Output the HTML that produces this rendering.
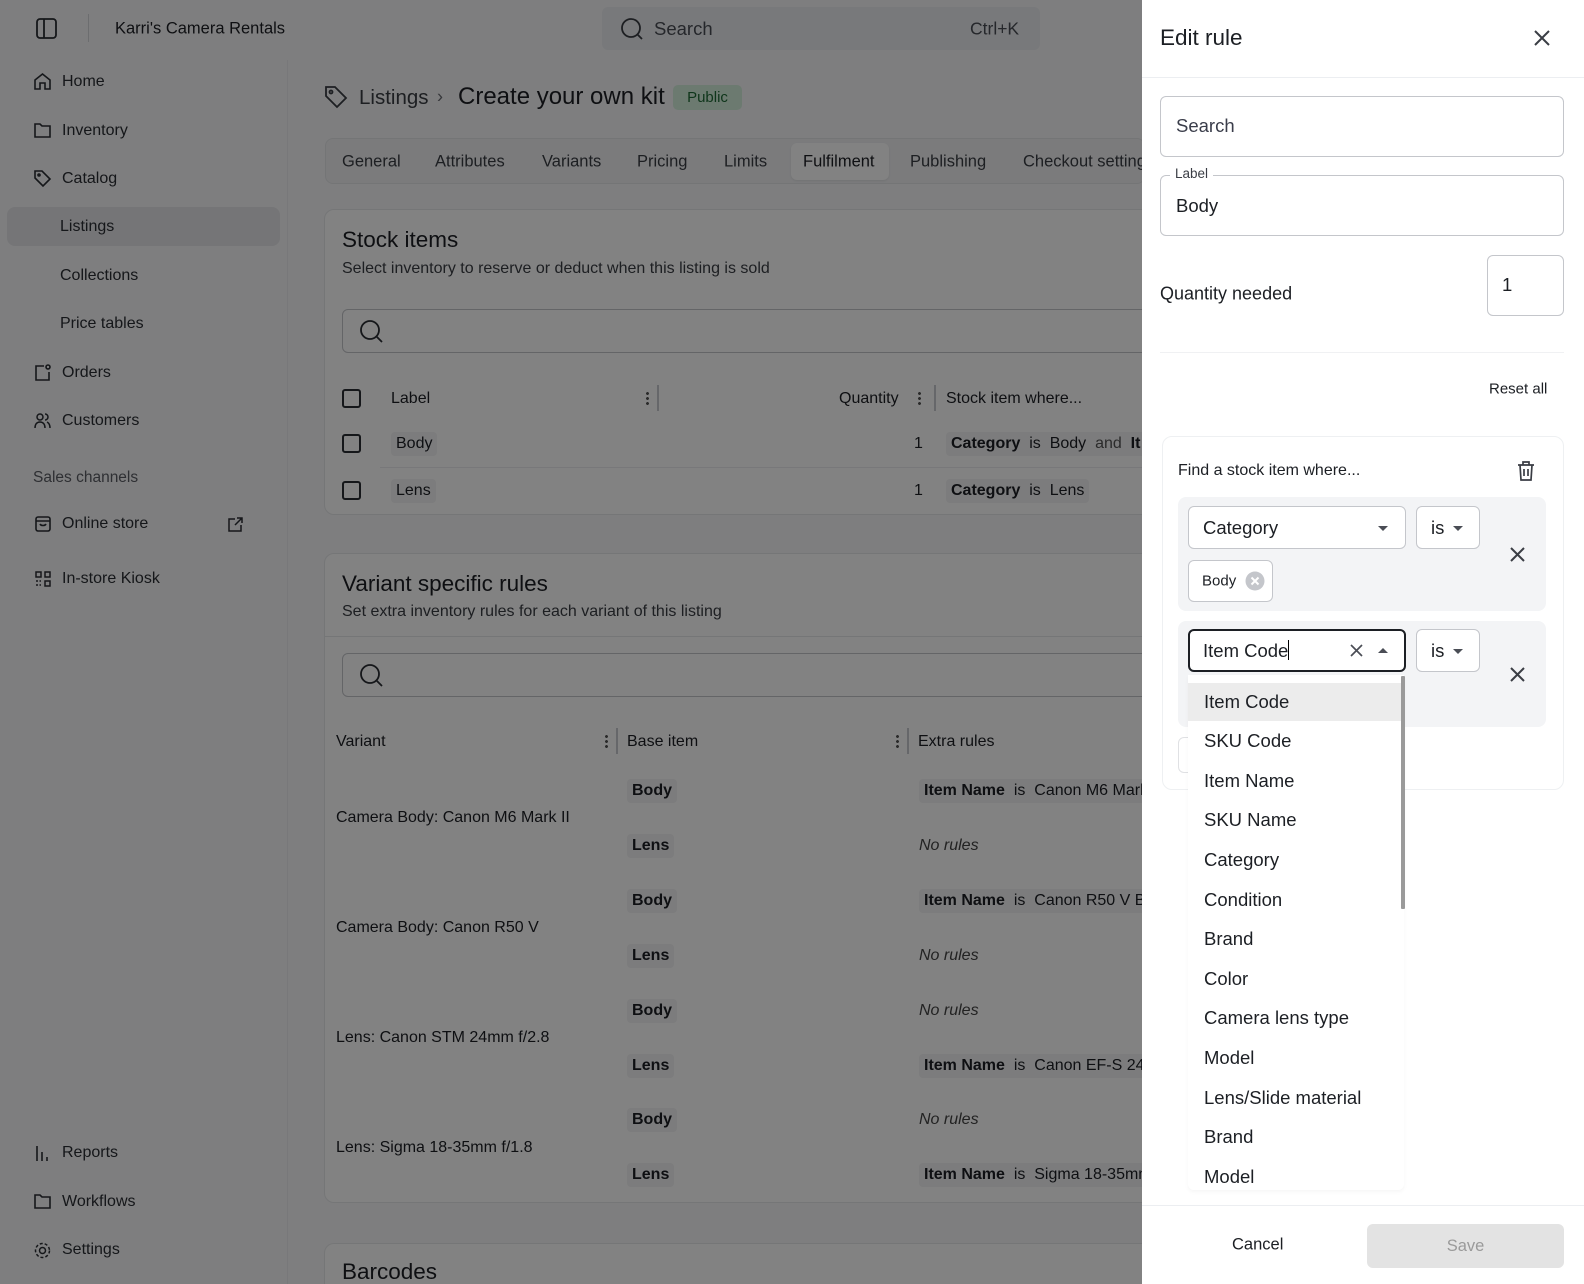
<!DOCTYPE html>
<html style="overflow:hidden;width:1584px;height:1284px"><head><meta charset="utf-8"><style>
*{box-sizing:border-box;margin:0;padding:0}
body{width:1584px;height:1284px;overflow:hidden;position:relative;background:#f8f8f9;font-family:"Liberation Sans",sans-serif;color:#1c1f24}
.a{position:absolute;white-space:nowrap}
.t{transform:translateY(-50%)}
.nav{font-size:16px;color:#2a2d33}
.card{position:absolute;background:#fff;border:1px solid #e6e7ea;border-radius:10px}
.chip{position:absolute;background:#f3f4f6;border-radius:4px;padding:3px 5px;font-size:16px;transform:translateY(-50%);white-space:nowrap}
.cb{position:absolute;width:19px;height:19px;border:2px solid #2a2d33;border-radius:3px}
.dots{position:absolute;width:3px;height:15px;background:radial-gradient(circle,#555 1.3px,transparent 1.6px) 0 0/3px 5px repeat-y}
.sep{position:absolute;width:2px;height:26px;background:#c9cbd0}
.inp{position:absolute;border:1px solid #c4c6cb;border-radius:6px;background:#fff}
.opt{position:absolute;left:1204px;font-size:18.5px;color:#1c1f24;transform:translateY(-50%)}
</style></head><body>

<!-- sidebar -->
<svg class="a" style="left:35px;top:17px" width="23" height="23" viewBox="0 0 23 23" fill="none" stroke="#2a2d33" stroke-width="1.8"><rect x="2" y="2" width="19" height="19" rx="3"/><line x1="9" y1="2" x2="9" y2="21"/></svg>
<div class="a" style="left:88px;top:14px;width:1px;height:28px;background:#d5d6da"></div>
<div class="a t" style="left:115px;top:29px;font-size:16.5px">Karri's Camera Rentals</div>
<div class="a" style="left:602px;top:7px;width:438px;height:43px;background:#eceef1;border-radius:6px"></div>
<svg class="a" style="left:620px;top:17px" width="24" height="24" viewBox="0 0 24 24" fill="none" stroke="#3a3d44" stroke-width="1.8"><circle cx="11" cy="11" r="9"/><line x1="17.5" y1="17.5" x2="22" y2="22"/></svg>
<div class="a t" style="left:654px;top:29px;font-size:18.5px;color:#4a4d55">Search</div>
<div class="a t" style="left:970px;top:29px;font-size:17.5px;color:#4a4d55">Ctrl+K</div>

<div class="a" style="left:7px;top:207px;width:273px;height:39px;background:#e5e6e9;border-radius:8px"></div>
<svg class="a" style="left:33px;top:72px" width="19" height="19" viewBox="0 0 19 19" fill="none" stroke="#2a2d33" stroke-width="1.6"><path d="M2 17V8l7.5-6 7.5 6v9h-5v-6h-5v6z"/></svg>
<div class="a t nav" style="left:62px;top:82px">Home</div>
<svg class="a" style="left:33px;top:121px" width="19" height="18" viewBox="0 0 19 18" fill="none" stroke="#2a2d33" stroke-width="1.6"><path d="M2 3h5l2 2h8v11H2z"/></svg>
<div class="a t nav" style="left:62px;top:131px">Inventory</div>
<svg class="a" style="left:33px;top:169px" width="19" height="19" viewBox="0 0 19 19" fill="none" stroke="#2a2d33" stroke-width="1.6"><path d="M2 2h7l8 8-7 7-8-8z"/><circle cx="6" cy="6" r="1"/></svg>
<div class="a t nav" style="left:62px;top:179px">Catalog</div>
<div class="a t nav" style="left:60px;top:227px">Listings</div>
<div class="a t nav" style="left:60px;top:276px">Collections</div>
<div class="a t nav" style="left:60px;top:324px">Price tables</div>
<svg class="a" style="left:33px;top:363px" width="19" height="19" viewBox="0 0 19 19" fill="none" stroke="#2a2d33" stroke-width="1.6"><path d="M11 3H3v14h13V9"/><circle cx="15" cy="4" r="2"/></svg>
<div class="a t nav" style="left:62px;top:373px">Orders</div>
<svg class="a" style="left:33px;top:411px" width="19" height="19" viewBox="0 0 19 19" fill="none" stroke="#2a2d33" stroke-width="1.5"><circle cx="7" cy="6" r="3"/><path d="M2 17c0-4 2-6 5-6s5 2 5 6"/><path d="M12 3a3 3 0 010 6M14 11c2 1 3 3 3 6"/></svg>
<div class="a t nav" style="left:62px;top:421px">Customers</div>
<div class="a t" style="left:33px;top:478px;font-size:15.5px;color:#5a5d64">Sales channels</div>
<svg class="a" style="left:34px;top:515px" width="18" height="18" viewBox="0 0 18 18" fill="none" stroke="#2a2d33" stroke-width="1.6"><rect x="2" y="2" width="14" height="14" rx="2"/><path d="M2 6h14M6 9c1 2 5 2 6 0"/></svg>
<div class="a t nav" style="left:62px;top:524px">Online store</div>
<svg class="a" style="left:227px;top:516px" width="17" height="17" viewBox="0 0 17 17" fill="none" stroke="#2a2d33" stroke-width="1.5"><path d="M8 3H2v12h12V9M10 2h5v5M15 2L8 9"/></svg>
<svg class="a" style="left:34px;top:570px" width="18" height="18" viewBox="0 0 18 18" fill="none" stroke="#2a2d33" stroke-width="1.5"><rect x="2" y="2" width="5" height="5"/><rect x="11" y="2" width="5" height="5"/><rect x="11" y="11" width="5" height="5"/><path d="M2 11h5M2 15h5" stroke-dasharray="2 1.5"/></svg>
<div class="a t nav" style="left:62px;top:579px">In-store Kiosk</div>
<svg class="a" style="left:34px;top:1144px" width="18" height="18" viewBox="0 0 18 18" fill="none" stroke="#2a2d33" stroke-width="1.6"><path d="M3 2v15M8 8v9M13 13v4"/></svg>
<div class="a t nav" style="left:62px;top:1153px">Reports</div>
<svg class="a" style="left:33px;top:1192px" width="19" height="18" viewBox="0 0 19 18" fill="none" stroke="#2a2d33" stroke-width="1.6"><path d="M2 3h5l2 2h8v11H2z"/></svg>
<div class="a t nav" style="left:62px;top:1202px">Workflows</div>
<svg class="a" style="left:33px;top:1241px" width="19" height="19" viewBox="0 0 19 19" fill="none" stroke="#2a2d33" stroke-width="1.5"><circle cx="9.5" cy="9.5" r="3"/><circle cx="9.5" cy="9.5" r="7" stroke-dasharray="3 2"/></svg>
<div class="a t nav" style="left:62px;top:1250px">Settings</div>
<div class="a" style="left:287px;top:60px;width:1px;height:1224px;background:#ececef"></div>

<!-- main -->
<svg class="a" style="left:323px;top:84px" width="26" height="26" viewBox="0 0 26 26" fill="none" stroke="#3a3d44" stroke-width="1.8"><path d="M3 3h9l11 11-9 9L3 12z"/><circle cx="8" cy="8" r="1.5"/></svg>
<div class="a t" style="left:359px;top:98px;font-size:20.5px;color:#3a3d44">Listings</div>
<div class="a t" style="left:437px;top:97px;font-size:18px;color:#6a6d74">›</div>
<div class="a t" style="left:458px;top:97px;font-size:24px;color:#1c1f24">Create your own kit</div>
<div class="a" style="left:673px;top:85px;width:69px;height:25px;background:#d5f0dc;border-radius:5px;font-size:15px;color:#1f6b35;text-align:center;line-height:25px">Public</div>

<div class="a" style="left:325px;top:138px;width:820px;height:46px;background:#f1f2f4;border:1px solid #e4e5e8;border-radius:8px"></div>
<div class="a" style="left:791px;top:143px;width:98px;height:37px;background:#fff;border-radius:6px;box-shadow:0 1px 2px rgba(0,0,0,.08)"></div>
<div class="a t" style="left:342px;top:162px;font-size:16.5px;color:#3a3d44">General</div>
<div class="a t" style="left:435px;top:162px;font-size:16.5px;color:#3a3d44">Attributes</div>
<div class="a t" style="left:542px;top:162px;font-size:16.5px;color:#3a3d44">Variants</div>
<div class="a t" style="left:637px;top:162px;font-size:16.5px;color:#3a3d44">Pricing</div>
<div class="a t" style="left:724px;top:162px;font-size:16.5px;color:#3a3d44">Limits</div>
<div class="a t" style="left:803px;top:162px;font-size:16.5px;color:#1c1f24">Fulfilment</div>
<div class="a t" style="left:910px;top:162px;font-size:16.5px;color:#3a3d44">Publishing</div>
<div class="a t" style="left:1023px;top:162px;font-size:16.5px;color:#3a3d44">Checkout settings</div>

<div class="card" style="left:324px;top:209px;width:840px;height:306px"></div>
<div class="a t" style="left:342px;top:240px;font-size:22.5px">Stock items</div>
<div class="a t" style="left:342px;top:269px;font-size:16px;color:#3a3d44">Select inventory to reserve or deduct when this listing is sold</div>
<div class="inp" style="left:342px;top:309px;width:820px;height:44px"></div>
<svg class="a" style="left:359px;top:319px" width="25" height="25" viewBox="0 0 25 25" fill="none" stroke="#2a2d33" stroke-width="1.8"><circle cx="11" cy="11" r="9"/><line x1="17.5" y1="17.5" x2="23" y2="23"/></svg>
<div class="cb" style="left:342px;top:389px"></div>
<div class="a t" style="left:391px;top:399px;font-size:16px">Label</div>
<div class="dots" style="left:646px;top:391px"></div><div class="sep" style="left:657px;top:385px"></div>
<div class="a t" style="left:839px;top:399px;font-size:16px">Quantity</div>
<div class="dots" style="left:918px;top:391px"></div><div class="sep" style="left:934px;top:385px"></div>
<div class="a t" style="left:946px;top:399px;font-size:16px">Stock item where...</div>
<div class="cb" style="left:342px;top:434px"></div>
<div class="chip" style="left:391px;top:444px">Body</div>
<div class="a t" style="left:914px;top:444px;font-size:16px">1</div>
<div class="chip" style="left:946px;top:444px"><b>Category</b>&nbsp; is&nbsp; Body&nbsp; <span style="color:#555">and</span>&nbsp; <b>It</b></div>
<div class="a" style="left:380px;top:467px;width:780px;height:1px;background:#ececef"></div>
<div class="cb" style="left:342px;top:481px"></div>
<div class="chip" style="left:391px;top:491px">Lens</div>
<div class="a t" style="left:914px;top:491px;font-size:16px">1</div>
<div class="chip" style="left:946px;top:491px"><b>Category</b>&nbsp; is&nbsp; Lens</div>

<div class="card" style="left:324px;top:553px;width:840px;height:650px"></div>
<div class="a t" style="left:342px;top:584px;font-size:22.5px">Variant specific rules</div>
<div class="a t" style="left:342px;top:612px;font-size:16px;color:#3a3d44">Set extra inventory rules for each variant of this listing</div>
<div class="a" style="left:325px;top:636px;width:820px;height:1px;background:#e6e7ea"></div>
<div class="inp" style="left:342px;top:653px;width:820px;height:44px"></div>
<svg class="a" style="left:359px;top:663px" width="25" height="25" viewBox="0 0 25 25" fill="none" stroke="#2a2d33" stroke-width="1.8"><circle cx="11" cy="11" r="9"/><line x1="17.5" y1="17.5" x2="23" y2="23"/></svg>
<div class="a t" style="left:336px;top:742px;font-size:16px">Variant</div>
<div class="dots" style="left:605px;top:734px"></div><div class="sep" style="left:616px;top:728px"></div>
<div class="a t" style="left:627px;top:742px;font-size:16px">Base item</div>
<div class="dots" style="left:896px;top:734px"></div><div class="sep" style="left:907px;top:728px"></div>
<div class="a t" style="left:918px;top:742px;font-size:16px">Extra rules</div>

<div class="a t" style="left:336px;top:818px;font-size:16px">Camera Body: Canon M6 Mark II</div>
<div class="chip" style="left:627px;top:791px"><b>Body</b></div>
<div class="chip" style="left:919px;top:791px"><b>Item Name</b>&nbsp; is&nbsp; Canon M6 Mark</div>
<div class="chip" style="left:627px;top:846px"><b>Lens</b></div>
<div class="a t" style="left:919px;top:846px;font-size:16px;font-style:italic;color:#444">No rules</div>

<div class="a t" style="left:336px;top:928px;font-size:16px">Camera Body: Canon R50 V</div>
<div class="chip" style="left:627px;top:901px"><b>Body</b></div>
<div class="chip" style="left:919px;top:901px"><b>Item Name</b>&nbsp; is&nbsp; Canon R50 V B</div>
<div class="chip" style="left:627px;top:956px"><b>Lens</b></div>
<div class="a t" style="left:919px;top:956px;font-size:16px;font-style:italic;color:#444">No rules</div>

<div class="a t" style="left:336px;top:1038px;font-size:16px">Lens: Canon STM 24mm f/2.8</div>
<div class="chip" style="left:627px;top:1011px"><b>Body</b></div>
<div class="a t" style="left:919px;top:1011px;font-size:16px;font-style:italic;color:#444">No rules</div>
<div class="chip" style="left:627px;top:1066px"><b>Lens</b></div>
<div class="chip" style="left:919px;top:1066px"><b>Item Name</b>&nbsp; is&nbsp; Canon EF-S 24</div>

<div class="a t" style="left:336px;top:1148px;font-size:16px">Lens: Sigma 18-35mm f/1.8</div>
<div class="chip" style="left:627px;top:1120px"><b>Body</b></div>
<div class="a t" style="left:919px;top:1120px;font-size:16px;font-style:italic;color:#444">No rules</div>
<div class="chip" style="left:627px;top:1175px"><b>Lens</b></div>
<div class="chip" style="left:919px;top:1175px"><b>Item Name</b>&nbsp; is&nbsp; Sigma 18-35mm</div>

<div class="card" style="left:324px;top:1243px;width:840px;height:41px;border-bottom:none;border-radius:10px 10px 0 0;overflow:hidden"><div style="position:absolute;left:17px;top:15px;font-size:22.5px">Barcodes</div></div>

<!-- overlay -->
<div class="a" style="left:0;top:0;width:1142px;height:1284px;background:rgba(0,0,0,0.49)"></div>

<!-- panel -->
<div class="a" style="left:1142px;top:0;width:442px;height:1284px;background:#fff"></div>
<div class="a t" style="left:1160px;top:38px;font-size:22.5px">Edit rule</div>
<svg class="a" style="left:1533px;top:29px" width="18" height="18" viewBox="0 0 18 18" stroke="#3a3d44" stroke-width="2"><path d="M2 2l14 14M16 2L2 16"/></svg>
<div class="a" style="left:1142px;top:77px;width:442px;height:1px;background:#eceef1"></div>
<div class="inp" style="left:1160px;top:96px;width:404px;height:61px"></div>
<div class="a t" style="left:1176px;top:126px;font-size:18.5px;color:#3a3d4a">Search</div>
<div class="inp" style="left:1160px;top:175px;width:404px;height:61px"></div>
<div class="a" style="left:1170px;top:166px;padding:0 5px;background:#fff;font-size:13.5px;color:#3a3d44">Label</div>
<div class="a t" style="left:1176px;top:206px;font-size:18.5px">Body</div>
<div class="a t" style="left:1160px;top:294px;font-size:18px">Quantity needed</div>
<div class="inp" style="left:1487px;top:255px;width:77px;height:61px"></div>
<div class="a t" style="left:1502px;top:285px;font-size:18.5px">1</div>
<div class="a" style="left:1160px;top:352px;width:404px;height:1px;background:#f0f1f3"></div>
<div class="a t" style="left:1489px;top:389px;font-size:15px">Reset all</div>

<div class="a" style="left:1162px;top:436px;width:402px;height:354px;border:1px solid #eef0f2;border-radius:10px"></div>
<div class="a t" style="left:1178px;top:471px;font-size:16px">Find a stock item where...</div>
<svg class="a" style="left:1516px;top:460px" width="20" height="22" viewBox="0 0 20 22" fill="none" stroke="#3a3d44" stroke-width="1.7"><path d="M2 5h16M7 5V2h6v3M4 5l1 15h10l1-15M8 9v7M12 9v7"/></svg>

<div class="a" style="left:1178px;top:497px;width:368px;height:114px;background:#f3f4f6;border-radius:8px"></div>
<div class="inp" style="left:1188px;top:506px;width:218px;height:43px"></div>
<div class="a t" style="left:1203px;top:528px;font-size:18.5px">Category</div>
<div class="a" style="left:1378px;top:526px;border:5px solid transparent;border-top:5px solid #4a4d55;border-bottom:0"></div>
<div class="inp" style="left:1416px;top:506px;width:64px;height:43px"></div>
<div class="a t" style="left:1431px;top:528px;font-size:18.5px">is</div>
<div class="a" style="left:1453px;top:526px;border:5px solid transparent;border-top:5px solid #4a4d55;border-bottom:0"></div>
<svg class="a" style="left:1510px;top:547px" width="15" height="15" viewBox="0 0 15 15" stroke="#3a3d44" stroke-width="2"><path d="M1 1l13 13M14 1L1 14"/></svg>
<div class="inp" style="left:1188px;top:560px;width:85px;height:42px"></div>
<div class="a t" style="left:1202px;top:581px;font-size:15px">Body</div>
<svg class="a" style="left:1245px;top:571px" width="20" height="20" viewBox="0 0 20 20"><circle cx="10" cy="10" r="9.5" fill="#c4c6cb"/><path d="M6.5 6.5l7 7M13.5 6.5l-7 7" stroke="#fff" stroke-width="2"/></svg>

<div class="a" style="left:1178px;top:621px;width:368px;height:106px;background:#f3f4f6;border-radius:8px"></div>
<div class="a" style="left:1188px;top:629px;width:218px;height:43px;border:2px solid #1c1f24;border-radius:6px;background:#fff"></div>
<div class="a t" style="left:1203px;top:651px;font-size:18.5px">Item Code<span style="display:inline-block;width:1px;height:20px;background:#000;vertical-align:-3px"></span></div>
<svg class="a" style="left:1350px;top:644px" width="13" height="13" viewBox="0 0 13 13" stroke="#4a4d55" stroke-width="1.7"><path d="M1 1l11 11M12 1L1 12"/></svg>
<div class="a" style="left:1378px;top:648px;border:5px solid transparent;border-bottom:5px solid #4a4d55;border-top:0"></div>
<div class="inp" style="left:1416px;top:629px;width:64px;height:43px"></div>
<div class="a t" style="left:1431px;top:651px;font-size:18.5px">is</div>
<div class="a" style="left:1453px;top:649px;border:5px solid transparent;border-top:5px solid #4a4d55;border-bottom:0"></div>
<svg class="a" style="left:1510px;top:667px" width="15" height="15" viewBox="0 0 15 15" stroke="#3a3d44" stroke-width="2"><path d="M1 1l13 13M14 1L1 14"/></svg>
<div class="a" style="left:1178px;top:737px;width:60px;height:36px;border:1px solid #e0e1e4;border-radius:6px"></div>

<div class="a" style="left:1188px;top:675px;width:216px;height:515px;background:#fff;border-radius:0 0 6px 6px;box-shadow:0 2px 4px rgba(0,0,0,.04)"></div>
<div class="a" style="left:1188px;top:683px;width:214px;height:38px;background:#ececec"></div>
<div class="a" style="left:1401px;top:676px;width:4px;height:233px;background:#9a9a9a;border-radius:1px"></div>
<div class="opt" style="top:702px">Item Code</div>
<div class="opt" style="top:741px">SKU Code</div>
<div class="opt" style="top:781px">Item Name</div>
<div class="opt" style="top:820px">SKU Name</div>
<div class="opt" style="top:860px">Category</div>
<div class="opt" style="top:900px">Condition</div>
<div class="opt" style="top:939px">Brand</div>
<div class="opt" style="top:979px">Color</div>
<div class="opt" style="top:1018px">Camera lens type</div>
<div class="opt" style="top:1058px">Model</div>
<div class="opt" style="top:1098px">Lens/Slide material</div>
<div class="opt" style="top:1137px">Brand</div>
<div class="opt" style="top:1177px">Model</div>

<div class="a" style="left:1142px;top:1205px;width:442px;height:1px;background:#eceef1"></div>
<div class="a t" style="left:1232px;top:1245px;font-size:16.5px">Cancel</div>
<div class="a" style="left:1367px;top:1224px;width:197px;height:44px;background:#e3e3e3;border-radius:6px;font-size:16.5px;color:#9a9a9a;text-align:center;line-height:44px">Save</div>
</body></html>
